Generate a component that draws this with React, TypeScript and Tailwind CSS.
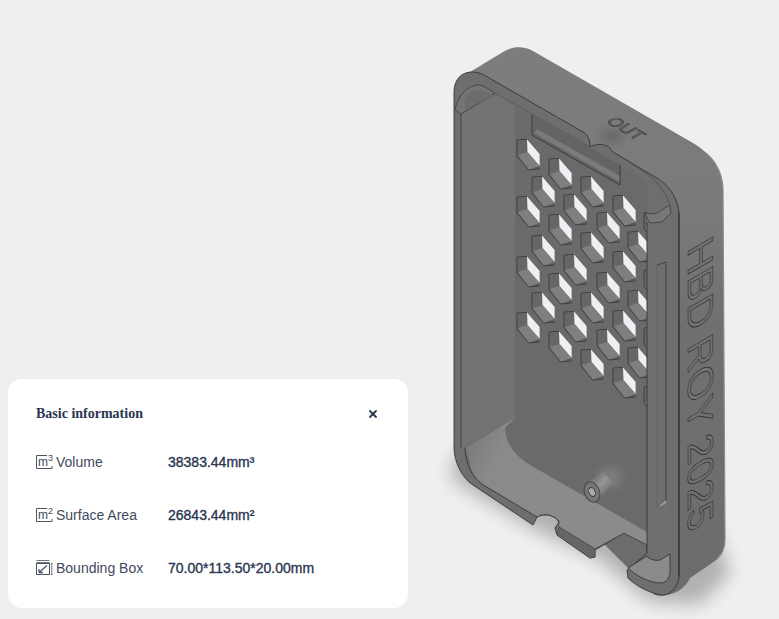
import { X } from "lucide-react";

const hexes: [number, number][] = [
  [517, 140], [517, 197], [517, 257], [517, 313],
  [532, 177], [532, 236], [532, 293],
  [549, 159], [549, 215], [549, 274], [549, 332],
  [564, 195], [564, 255], [564, 312],
  [581, 177], [581, 233], [581, 293], [581, 350],
  [597, 213], [597, 273], [597, 330],
  [613, 196], [613, 252], [613, 311], [613, 368],
  [628, 232], [628, 291], [628, 348],
  [644, 213], [644, 270], [644, 328], [644, 387],
];

function Hex({ x, y }: { x: number; y: number }) {
  return (
    <g transform={`translate(${x} ${y})`}>
      <path d="M0 0L10 -.7L22.6 14V29L11.7 30L0 16Z" fill="#666" />
      <path d="M10 -.5L22.6 14V26L10.5 12Z" fill="#eef0f3" />
      <path d="M1 15L10.5 12L22.6 26L11.7 30Z" fill="#7f7f7f" />
      <path d="M11.7 30L22.6 26V29Z" fill="#5c5c5c" />
      <path d="M10 -.7L0 0V16L11.7 30L22.6 29" fill="none" stroke="#383838" strokeWidth=".8" />
    </g>
  );
}

function Model() {
  return (
    <svg viewBox="0 0 779 619" className="absolute inset-0 h-full w-full">
      <defs>
        <linearGradient id="side" x1="0" y1="0" x2="0" y2="1">
          <stop offset="0" stopColor="#7d7d7d" />
          <stop offset="0.3" stopColor="#7a7a7a" />
          <stop offset="0.5" stopColor="#707070" />
          <stop offset="1" stopColor="#6c6c6c" />
        </linearGradient>
        <linearGradient id="floor" x1="0" y1="0" x2="1" y2="0.3">
          <stop offset="0" stopColor="#777" />
          <stop offset="0.25" stopColor="#8a8a8a" />
          <stop offset="1" stopColor="#8b8b8b" />
        </linearGradient>
        <linearGradient id="post" x1="0" y1="0" x2="1" y2="1">
          <stop offset="0.1" stopColor="#626262" />
          <stop offset="0.5" stopColor="#969696" />
          <stop offset="0.9" stopColor="#666" />
        </linearGradient>
        <filter id="soft" x="-20%" y="-20%" width="140%" height="140%">
          <feGaussianBlur stdDeviation="9" />
        </filter>
        <filter id="softer" x="-30%" y="-30%" width="160%" height="160%">
          <feGaussianBlur stdDeviation="4" />
        </filter>
        <clipPath id="plate">
          <rect x="515" y="100" width="132" height="440" />
        </clipPath>
      </defs>

      {/* ground shadow */}
      <g filter="url(#soft)" fill="#000" opacity=".26">
        <path d="M458 450L450 478L480 497L535 530L600 560L650 602L700 604L730 574L715 530L600 480Z" />
      </g>

      {/* top and right faces */}
      <path
        d="M455 90C456 80 462 74 470 72L503 52C512 46 524 46 533 51L693 143C710 153 722 168 723 188L725 540C725 552 720 558 712 563L690 578C685 590 670 598 655 595L460 400Z"
        fill="url(#side)"
      />
      <path d="M707 154C716 162 722 174 723 188L725 540C725 548 722 554 717 559" fill="none" stroke="#8c8c8c" strokeWidth="1.2" />
      <ellipse cx="612" cy="136" rx="12" ry="7" fill="#6a6a6a" filter="url(#softer)" />

      {/* front rim */}
      <path
        d="M454 92C454 80 461 72 472 72C476 72 480 73 484 75L583 132C588 135 590 140 590 147C594 144 605 143 610 148C611 150 612 151 613 152L660 180C671 188 678 200 679 213V577C677 590 668 596 660 595C648 592 636 586 628 578L627 570L647 553V545L624 533L595 550V557L590 558L557 535L555 528L559 522C556 516 545 512 537 517L533 525L473 485C462 478 454 462 454 447Z"
        fill="#6e6e6e"
        stroke="#363636"
        strokeWidth=".9"
      />

      {/* inside of the case */}
      <path d="M461 114L497 95L515 107V418L461 448Z" fill="#737373" />
      <path d="M515 107L647 182V540L530 465C514 455 505 442 505 428L515 418Z" fill="#6a6a6a" />
      <path d="M461 114V448" stroke="#3f3f3f" strokeWidth=".9" fill="none" />
      <path d="M515 108V418" stroke="#5a5a5a" strokeWidth=".6" strokeDasharray="1 5" fill="none" />

      {/* port window under the top wall */}
      <path d="M532 115L620 165V185L532 135Z" fill="#646464" />
      <path d="M537 129L620 176V182L534 133Z" fill="#7b7b7b" />
      <path d="M532 115V135L620 185V165" fill="none" stroke="#3a3a3a" strokeWidth="1" />

      {/* top-left clip */}
      <path
        d="M455 110C457 100 463 88 476 85C482 84 488 89 495 93L461 114Z"
        fill="#747474"
        stroke="#3c3c3c"
        strokeWidth=".8"
      />
      <path d="M464 102C467 93 473 89 479 90C485 91 489 94 493 95L466 110Z" fill="#6c6c6c" />
      <path d="M495 93L590 147" stroke="#575757" strokeWidth=".8" />

      <g clipPath="url(#plate)">
        {hexes.map(([x, y]) => (
          <Hex key={`${x}-${y}`} x={x} y={y} />
        ))}
      </g>

      {/* floor */}
      <path
        d="M465 448L515 418L505 428C505 442 514 455 530 465L647 532V545L624 533L595 549L559 527L560 522C556 516 545 512 537 517L485 486C476 481 470 472 470 460Z"
        fill="url(#floor)"
      />
      <path d="M465 448C466 465 472 478 485 486L537 517C545 512 556 516 559 522" fill="none" stroke="#353535" strokeWidth=".9" />
      <path d="M559 527L595 549L624 533L647 545" fill="none" stroke="#484848" strokeWidth=".8" />
      <path d="M559 527L557 535L590 558L595 557V549Z" fill="#666" stroke="#444" strokeWidth=".6" />

      {/* screw post */}
      <path d="M596 478L606 466L620 470L622 482L610 490Z" fill="#7c7c7c" filter="url(#softer)" />
      <path d="M587 483L603 472L613 483L599 498Z" fill="url(#post)" />
      <ellipse cx="592" cy="492" rx="7.5" ry="10.5" transform="rotate(-22 592 492)" fill="#777" stroke="#3d3d3d" strokeWidth=".9" />
      <ellipse cx="592" cy="492" rx="3.2" ry="4.6" transform="rotate(-22 592 492)" fill="#a9a9a9" stroke="#3d3d3d" strokeWidth=".9" />

      {/* right wall */}
      <path d="M647 222L670 213V553L660 560L647 553Z" fill="#6f6f6f" />
      <path d="M647 222V553" stroke="#3d3d3d" fill="none" />
      <path d="M657 265V507" stroke="#5e5e5e" strokeWidth=".6" />
      <path d="M657 265L666 262V500L657 507" fill="none" stroke="#3d3d3d" strokeWidth=".9" />
      <path d="M657 507L666 500V504L657 507Z" fill="#999" />
      <path d="M645 213L655 214L670 205L671 213L662 222L650 223L647 218Z" fill="#777" stroke="#3d3d3d" strokeWidth=".8" />
      <path d="M613 152C633 165 654 175 664 192C668 198 669 203 670 206" fill="none" stroke="#4a4a4a" strokeWidth=".8" />
      <path d="M679 213V577" stroke="#333" strokeWidth="1.1" />

      {/* bottom-right clip */}
      <path
        d="M628 568L647 556C649 560 657 561 660 560L670 554V573C669 580 665 583 660 583C650 583 636 576 628 568Z"
        fill="#8a8a8a"
        stroke="#383838"
        strokeWidth=".9"
      />

      {/* engraved text */}
      <text
        transform="matrix(0 1 -1 .58 688 248)"
        fontFamily="Liberation Sans, sans-serif"
        fontSize="36"
        textLength="287"
        lengthAdjust="spacingAndGlyphs"
        fill="#717171"
        stroke="#2e2e2e"
        strokeWidth=".6"
      >
        HBD ROY 2025
      </text>
      <text
        transform="matrix(.87 .5 -.85 .52 605 122)"
        fontFamily="Liberation Sans, sans-serif"
        fontSize="17"
        textLength="37"
        lengthAdjust="spacingAndGlyphs"
        fill="#797979"
        stroke="#2e2e2e"
        strokeWidth=".6"
      >
        OUT
      </text>
    </svg>
  );
}

function AreaIcon({ power }: { power: string }) {
  return (
    <svg viewBox="0 0 17 16" className="h-4 w-[17px] shrink-0" fill="none">
      <path d="M11 1.5H.5V14.5H16V12" stroke="#4b5563" />
      <text x="2" y="11.5" fontFamily="Liberation Sans, sans-serif" fontSize="12" fill="#3f4a5c">
        m
      </text>
      <text x="12" y="7" fontFamily="Liberation Sans, sans-serif" fontSize="9" fill="#3f4a5c">
        {power}
      </text>
    </svg>
  );
}

function BoxIcon() {
  return (
    <svg viewBox="0 0 17 16" className="h-4 w-[17px] shrink-0" fill="none" stroke="#4b5563">
      <path d="M.5 .5H13.5M.5 2.5H13.5" strokeWidth=".8" />
      <rect x=".5" y="3.5" width="13" height="11" />
      <path d="M3 12.5L11 5.5M3 12.5V9M3 12.5H7" strokeWidth="1.3" />
      <path d="M15 3.5H16.6M15.8 3.5V14.5M15 14.5H16.6" strokeWidth=".8" />
    </svg>
  );
}

const rows = [
  { icon: <AreaIcon power="3" />, label: "Volume", value: "38383.44mm³" },
  { icon: <AreaIcon power="2" />, label: "Surface Area", value: "26843.44mm²" },
  { icon: <BoxIcon />, label: "Bounding Box", value: "70.00*113.50*20.00mm" },
];

export default function App() {
  return (
    <div className="relative h-[619px] w-[779px] overflow-hidden bg-[#edeff1] font-['Liberation_Sans',sans-serif]">
      <Model />
      {/* info card */}
      <div className="absolute bottom-[11px] left-2 h-[229px] w-[400px] rounded-[14px] bg-white px-7 pt-[25px]">
        <div className="flex h-5 items-center justify-between">
          <span className="font-['Liberation_Serif',serif] text-sm font-bold text-[#2a3550]">Basic information</span>
          <X size={12} strokeWidth={3.6} className="mr-[1px] text-[#2a3550]" />
        </div>
        <div className="mt-[11px] flex flex-col">
          {rows.map((r) => (
            <div key={r.label} className="flex h-[53px] items-center">
              <div className="flex w-[132px] items-center gap-[3px] text-sm text-[#3f4a5c]">
                {r.icon}
                <span>{r.label}</span>
              </div>
              <span className="text-sm text-[#2a3550] [-webkit-text-stroke:0.35px_#2a3550]">{r.value}</span>
            </div>
          ))}
        </div>
      </div>
    </div>
  );
}
